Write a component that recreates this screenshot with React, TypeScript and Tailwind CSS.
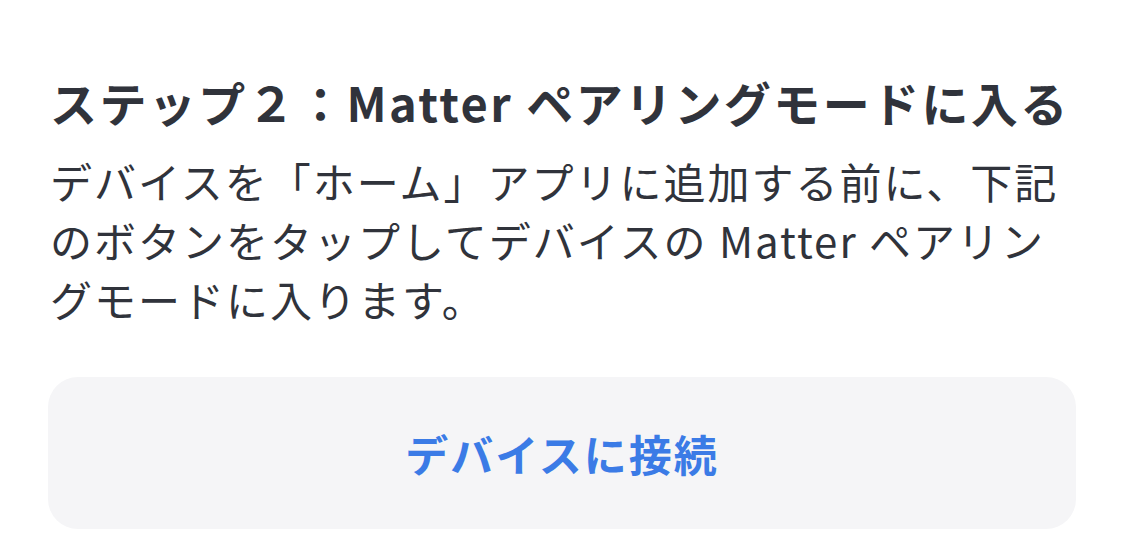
import React from "react";

const font = { fontFamily: '"Noto Sans CJK JP", "Noto Sans", sans-serif' };

export default function App() {
  return (
    <div
      className="w-[1125px] h-[553px] bg-white overflow-hidden pl-[50px] pr-[48px] pt-[72px] text-[#30333b]"
      style={font}
    >
      <h1 className="text-[47px] font-bold leading-[60px] tracking-[2.4px] whitespace-nowrap">
        ステップ２：Matter ペアリングモードに入る
      </h1>
      <p className="mt-[19px] text-[42px] leading-[59px] tracking-[2px] whitespace-nowrap">
        デバイスを「ホーム」アプリに追加する前に、下記
        <br />
        のボタンをタップしてデバイスの Matter ペアリン
        <br />
        グモードに入ります。
      </p>
      <button className="mt-[49px] -ml-[2px] w-[1028px] h-[152px] rounded-[30px] bg-[#f5f5f7] flex items-center justify-center">
        <span className="text-[43px] font-bold text-[#3b7be6] tracking-[2px]">
          デバイスに接続
        </span>
      </button>
    </div>
  );
}
